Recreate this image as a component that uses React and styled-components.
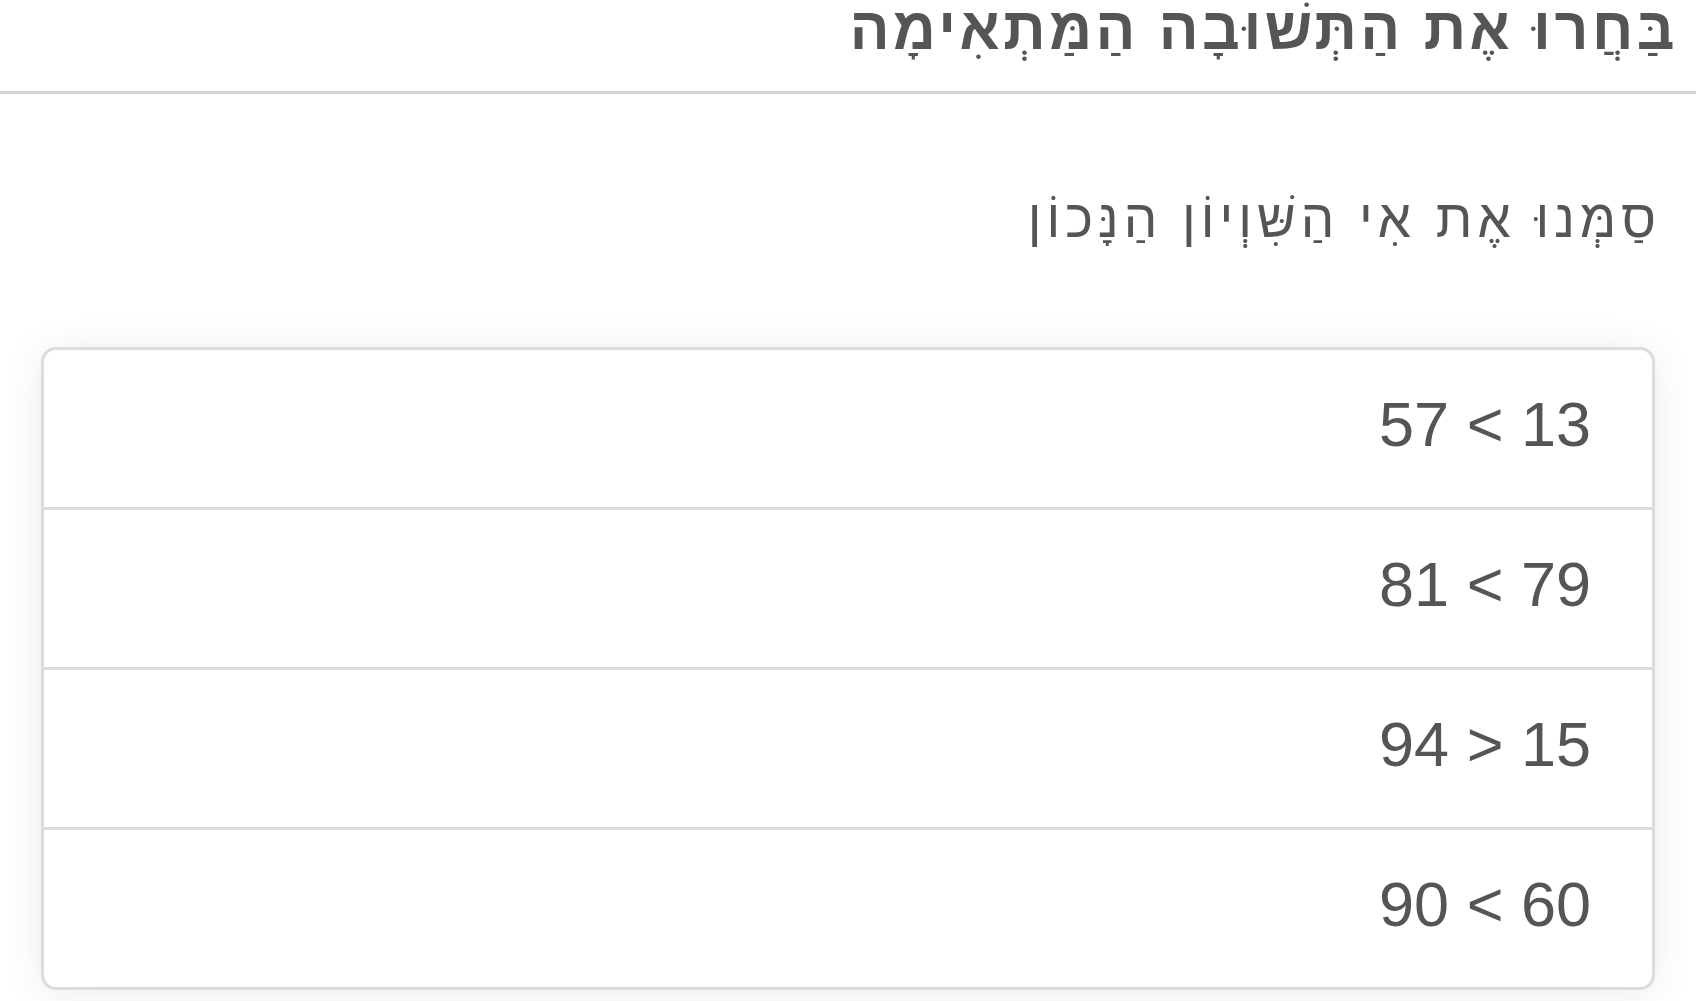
import styled, { createGlobalStyle } from "styled-components"

const GlobalStyle = createGlobalStyle`
    html, body {
        margin: 0;
        padding: 0;
        background: #ffffff;
    }
    body {
        font-family: "Liberation Sans", Arial, sans-serif;
        color: #555555;
    }
`

const Page = styled.div`
    direction: rtl;
    height: 1001px;
    overflow: hidden;
`

const Header = styled.header`
    height: 91px;
    border-bottom: 3px solid #d4d4d4;
    padding: 0 18px;
    display: flex;
    align-items: flex-start;
`

const Title = styled.h1`
    margin: -3px 0 0 0;
    font-size: 59px;
    font-weight: 700;
    line-height: 64px;
    letter-spacing: 3.5px;
    color: #555555;
`

const Content = styled.main`
    padding: 0 41px 0 41px;
`

const Question = styled.p`
    margin: 0 -6px 0 0;
    padding-top: 95px;
    height: 157px;
    box-sizing: border-box;
    font-size: 53px;
    line-height: 60px;
    letter-spacing: 5px;
    font-weight: 400;
`

const Options = styled.ul`
    list-style: none;
    margin: 96px 0 0 0;
    padding: 0;
    border: 3px solid #dcdcdc;
    border-radius: 15px;
    overflow: hidden;
    box-shadow: 0 4px 40px rgba(0, 0, 0, 0.08);
    background: #ffffff;
`

const Option = styled.li`
    height: 149px;
    display: flex;
    align-items: center;
    padding: 0 61px 8px 0;
    border-top: ${props => props.first ? "none" : "3px solid #dcdcdc"};
    cursor: pointer;
`

const Expression = styled.span`
    direction: ltr;
    unicode-bidi: isolate;
    font-size: 63px;
    line-height: 1;
    color: #555555;
`

const options = ["57 < 13", "81 < 79", "94 > 15", "90 < 60"]

const App = () => {
    return (
        <Page>
            <GlobalStyle />
            <Header>
                <Title>בַּחֲרוּ אֶת הַתְּשׁוּבָה הַמַּתְאִימָה</Title>
            </Header>
            <Content>
                <Question>סַמְּנוּ אֶת אִי הַשִּׁוְיוֹן הַנָּכוֹן</Question>
                <Options>
                    {options.map((text, i) => (
                        <Option key={text} first={i === 0}>
                            <Expression>{text}</Expression>
                        </Option>
                    ))}
                </Options>
            </Content>
        </Page>
    )
}

export default App
